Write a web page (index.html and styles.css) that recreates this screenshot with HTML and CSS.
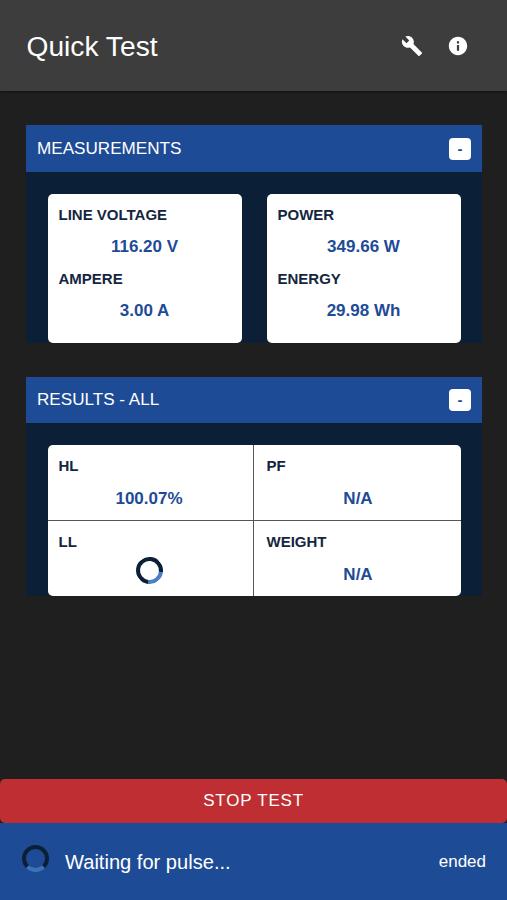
FILE: index.html
```html
<!DOCTYPE html>
<html lang="en">
  <head>
    <meta charset="UTF-8" />
    <meta name="viewport" content="width=device-width, initial-scale=1.0" />
    <title>Quick Test</title>
    <link rel="stylesheet" href="styles.css">
  </head>
  <body>
    <header class="toolbar">
      <h1>Quick Test</h1>
      <div class="toolbar-actions">
        <svg class="icon" viewBox="0 0 24 24" aria-label="Settings">
          <path d="M22.7 19l-9.1-9.1c.9-2.3.4-5-1.5-6.9-2-2-5-2.4-7.4-1.3L9 6 6 9 1.6 4.7C.4 7.1.9 10.1 2.9 12.1c1.9 1.9 4.6 2.4 6.9 1.5l9.1 9.1c.4.4 1 .4 1.4 0l2.3-2.3c.5-.4.5-1.1.1-1.4z" />
        </svg>
        <svg class="icon" viewBox="0 0 24 24" aria-label="Info">
          <path d="M12 2C6.48 2 2 6.48 2 12s4.48 10 10 10 10-4.48 10-10S17.52 2 12 2zm1.2 15.2h-2.4v-6.4h2.4v6.4zm0-8h-2.4V6.8h2.4v2.4z" />
        </svg>
      </div>
    </header>

    <main class="content">
      <section class="panel">
        <div class="panel-header">
          <h2>MEASUREMENTS</h2>
          <button class="toggle">-</button>
        </div>
        <div class="panel-body measurements">
          <div class="card">
            <div class="label">LINE VOLTAGE</div>
            <div class="value">116.20 V</div>
            <div class="label">AMPERE</div>
            <div class="value">3.00 A</div>
          </div>
          <div class="card">
            <div class="label">POWER</div>
            <div class="value">349.66 W</div>
            <div class="label">ENERGY</div>
            <div class="value">29.98 Wh</div>
          </div>
        </div>
      </section>

      <section class="panel">
        <div class="panel-header results-header">
          <h2>RESULTS - ALL</h2>
          <button class="toggle">-</button>
        </div>
        <div class="panel-body">
          <div class="results">
            <div class="cell">
              <div class="label">HL</div>
              <div class="value">100.07%</div>
            </div>
            <div class="cell">
              <div class="label">PF</div>
              <div class="value">N/A</div>
            </div>
            <div class="cell">
              <div class="label">LL</div>
              <div class="value"><span class="spinner spinner-result"></span></div>
            </div>
            <div class="cell">
              <div class="label">WEIGHT</div>
              <div class="value">N/A</div>
            </div>
          </div>
        </div>
      </section>
    </main>

    <footer>
      <button class="stop">STOP TEST</button>
      <div class="status">
        <span class="spinner"></span>
        <span class="status-text">Waiting for pulse...</span>
        <span class="status-end">ended</span>
      </div>
    </footer>
  </body>
</html>
```

FILE: styles.css
```css
/* General styles */
* {
  box-sizing: border-box;
}

body {
  margin: 0;
  height: 100vh;
  display: flex;
  flex-direction: column;
  overflow: hidden;
  background-color: #1f1f1f;
  color: #fff;
  font-family: "Liberation Sans", Arial, sans-serif;
}

h1,
h2 {
  margin: 0;
  font-weight: normal;
}

button {
  border: none;
  padding: 0;
  font-family: inherit;
}

/* Toolbar */
.toolbar {
  display: flex;
  justify-content: space-between;
  align-items: center;
  height: 91px;
  padding: 3px 38px 0 26.5px;
  background-color: #3d3d3d;
  box-shadow: 0 1px 3px rgba(0, 0, 0, 0.5);
}

h1 {
  padding-bottom: 2px;
  font-size: 28.2px;
}

.toolbar-actions {
  display: flex;
  gap: 24px;
  padding-bottom: 2px;
}

.icon {
  width: 22px;
  height: 22px;
  fill: #fff;
}

/* Panels */
.content {
  flex: 1;
  padding: 34px 25px 0 26px;
}

.panel {
  margin-bottom: 34px;
  background-color: #0b2036;
}

.panel-header {
  display: flex;
  justify-content: space-between;
  align-items: center;
  height: 47px;
  padding: 0 11px;
  background-color: #1e4b96;
}

.results-header {
  height: 46px;
}

h2 {
  font-size: 17.1px;
}

.toggle {
  width: 22px;
  height: 22px;
  border-radius: 4px;
  background-color: #fff;
  color: #1e4b96;
  font-size: 15px;
  font-weight: bold;
  line-height: 22px;
}

.panel-body {
  padding: 22px 21.5px 0 21.5px;
}

.measurements {
  display: grid;
  grid-template-columns: 1fr 1fr;
  gap: 25px;
}

.card {
  height: 149px;
  padding: 10px 11px;
  border-radius: 5px;
  background-color: #fff;
}

.label {
  height: 22px;
  color: #14263f;
  font-size: 15px;
  font-weight: bold;
  line-height: 22px;
}

.value {
  display: flex;
  justify-content: center;
  align-items: center;
  height: 42px;
  color: #1e4b96;
  font-size: 17px;
  font-weight: bold;
}

/* Results grid */
.results {
  display: grid;
  grid-template-columns: 206px 1fr;
  grid-template-rows: 76px 75px;
  border-radius: 5px;
  background-color: #fff;
  overflow: hidden;
}

.cell {
  padding: 10px 11px 0 13px;
}

.cell .value {
  height: 43px;
}

.cell:nth-child(odd) {
  padding: 10px 13px 0 11px;
  border-right: 1px solid #555;
}

.cell:nth-child(-n + 2) {
  border-bottom: 1px solid #555;
}

/* Spinners */
.spinner {
  width: 27px;
  height: 27px;
  border: 4px solid #0b2036;
  border-bottom-color: #3d71b8;
  border-radius: 50%;
}

.spinner-result {
  margin-bottom: 9px;
  border-bottom-color: #4a80c8;
  transform: rotate(-38deg);
}

/* Footer */
.stop {
  display: block;
  width: 100%;
  height: 44px;
  border-radius: 5px;
  background-color: #be2e32;
  color: #fff;
  font-size: 17px;
  letter-spacing: 0.8px;
}

.status {
  display: flex;
  align-items: center;
  height: 77px;
  padding: 0 21px 0 22px;
  background-color: #1e4b96;
}

.status .spinner {
  margin-bottom: 6px;
}

.status-text {
  flex: 1;
  margin-left: 16px;
  padding-top: 1px;
  font-size: 20.1px;
}

.status-end {
  padding-top: 1px;
  font-size: 17px;
}
```
